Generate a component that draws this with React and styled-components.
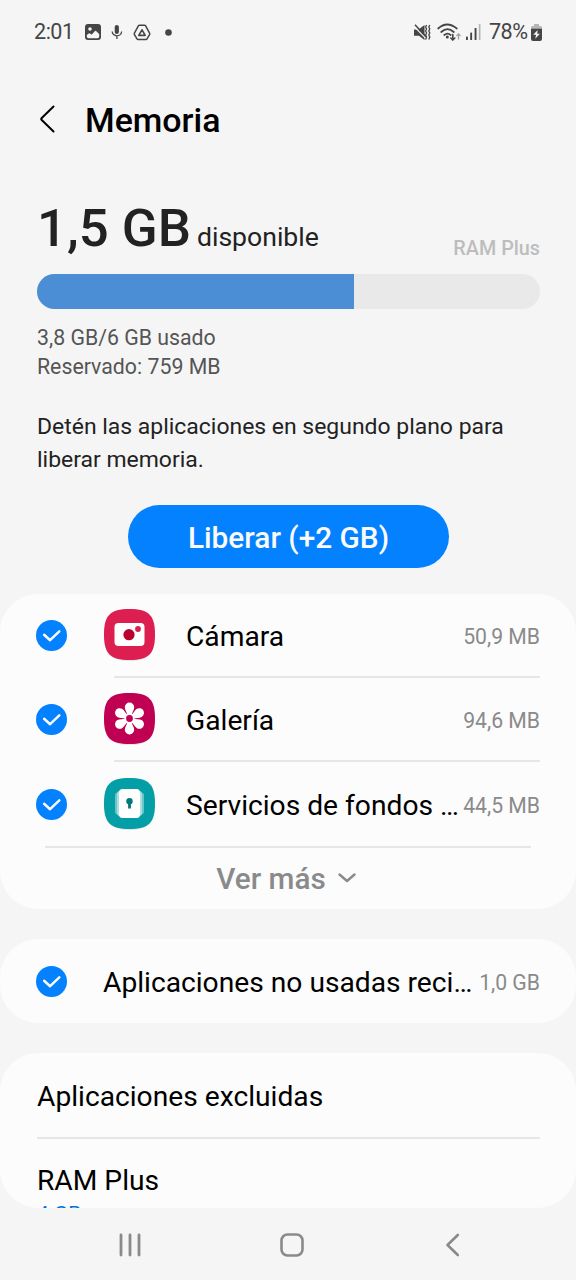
import React from 'react'
import styled, { createGlobalStyle } from 'styled-components'

const GlobalStyle = createGlobalStyle`
  * {
    box-sizing: border-box;
  }

  body {
    margin: 0;
    background: #f5f5f5;
    font-family: Roboto, 'Liberation Sans', sans-serif;
    color: #000;
  }
`

const Screen = styled.div`
  width: 576px;
  height: 1280px;
  display: flex;
  flex-direction: column;
  overflow: hidden;
  background: #f5f5f5;
`

// Status bar
const StatusBar = styled.div`
  height: 64px;
  flex: none;
  display: flex;
  align-items: center;
  justify-content: space-between;
  padding: 0 34px 0 34px;
  color: #454545;

  svg {
    display: block;
  }
`

const StatusGroup = styled.div`
  display: flex;
  align-items: center;
`

const StatusText = styled.span`
  font-size: 21.6px;
  letter-spacing: -0.5px;
  line-height: 26px;
  white-space: nowrap;
`

const StatusIcon = styled.span`
  margin-left: ${props => props.gap}px;
`

// Header
const Header = styled.header`
  height: 112px;
  flex: none;
  display: flex;
  align-items: center;
  padding-left: 37px;
`

const BackButton = styled.button`
  width: 48px;
  height: 48px;
  padding: 0;
  border: 0;
  background: none;

  svg {
    display: block;
  }
`

const Title = styled.h1`
  margin: 0;
  padding-top: 1px;
  font-size: 33.9px;
  font-weight: 500;
  line-height: 40px;
`

// Memory summary
const Summary = styled.section`
  flex: none;
  height: 418px;
  padding: 19px 36px 0 37px;
`

const SummaryTop = styled.div`
  display: flex;
  align-items: baseline;
  height: 79px;
  line-height: 66px;
  color: #222;
`

const Amount = styled.span`
  font-size: 52.7px;
  font-weight: 500;
`

const AmountLabel = styled.span`
  margin-left: 6px;
  font-size: 26.6px;
`

const RamPlusLabel = styled.span`
  align-self: flex-start;
  margin-left: auto;
  padding-top: 44px;
  font-size: 19.8px;
  font-weight: 500;
  line-height: 20px;
  color: #bdbdbd;
`

const Bar = styled.div`
  height: 35px;
  border-radius: 18px;
  overflow: hidden;
  background: #e9e9e9;
`

const BarFill = styled.div`
  height: 100%;
  background: #4b8ed5;
`

const Usage = styled.p`
  margin: 14px 0 0;
  font-size: 21.3px;
  line-height: 29px;
  color: #555;
`

const Description = styled.p`
  margin: 29px 0 0;
  font-size: 22.95px;
  line-height: 33px;
  color: #222;
`

const FreeButton = styled.button`
  display: block;
  width: 321px;
  height: 63px;
  margin: 29px auto 0;
  padding: 2px 0 0;
  border: 0;
  border-radius: 32px;
  background: #0381fe;
  color: #fafafa;
  font-family: inherit;
  font-size: 29.8px;
  font-weight: 500;
`

// Cards
const Cards = styled.main`
  flex: none;
  height: 614px;
  overflow: hidden;
  border-radius: 0 0 38px 38px;
  display: flex;
  flex-direction: column;
  gap: 30px;
`

const Card = styled.section`
  flex: none;
  height: ${props => props.height}px;
  border-radius: 38px;
  background: #fcfcfc;
`

const Divider = styled.div`
  height: 2px;
  margin: 0 ${props => props.right || 36}px 0 ${props => props.left}px;
  background: #e6e6e6;
`

const Row = styled.div`
  display: flex;
  align-items: center;
  height: ${props => props.height}px;
  padding: 0 36px;

  svg {
    display: block;
    flex: none;
  }
`

const IconSlot = styled.span`
  margin: 0 31px 0 37px;
`

const Name = styled.span`
  flex: 1;
  min-width: 0;
  margin-left: ${props => props.left || 0}px;
  padding-top: 4px;
  overflow: hidden;
  text-overflow: ellipsis;
  white-space: nowrap;
  font-size: 28.2px;
  line-height: 36px;
`

const Size = styled.span`
  margin-left: 4px;
  padding-top: 4px;
  font-size: 21.2px;
  line-height: 26px;
  white-space: nowrap;
  color: #8a8a8a;
`

const MoreButton = styled.button`
  display: flex;
  align-items: center;
  justify-content: center;
  width: 100%;
  height: 61px;
  padding: 0 4px 0 0;
  border: 0;
  background: none;
  font-family: inherit;
  font-size: 29.7px;
  font-weight: 500;
  color: #8a8a8a;

  svg {
    margin: -2px 0 0 12px;
  }
`

const SettingItem = styled.div`
  height: 84px;
  padding: ${props => props.top}px 37px 0;
  font-size: 28.2px;
  line-height: 36px;
`

const SettingValue = styled.div`
  font-size: 21px;
  line-height: 31px;
  color: #0072de;
`

// Navigation bar
const NavBar = styled.nav`
  flex: none;
  height: 72px;
  display: flex;
  align-items: center;
  justify-content: space-between;
  padding: 1px 114px 0 117px;

  svg {
    display: block;
  }
`

const ImageIcon = () => (
  <svg width="16" height="16" viewBox="0 0 16 16">
    <path
      fillRule="evenodd"
      fill="currentColor"
      d="M3 0H13Q16 0 16 3V13Q16 16 13 16H3Q0 16 0 13V3Q0 0 3 0ZM5 3.2a1.8 1.8 0 1 0 0 3.6a1.8 1.8 0 1 0 0-3.6ZM1.8 11V12.5Q1.8 14.2 3.5 14.2H12.5Q14.2 14.2 14.2 12.5V10L11 7Q10.4 6.600 9.800 7.200L7 10.300Q6.500 10.700 6 10.300L4.900 9.400Q4.300 9 3.800 9.400Z"
    />
  </svg>
)

const MicIcon = () => (
  <svg width="12" height="16" viewBox="0 0 12 16" fill="none" stroke="currentColor">
    <rect x="3.700" y="1" width="4.200" height="9" rx="2.100" fill="currentColor" stroke="none" />
    <path d="M1.200 7.500a4.700 4.300 0 0 0 9.400 0M5.900 12v3" strokeWidth="1.300" />
  </svg>
)

const DriveIcon = () => (
  <svg width="18" height="17" viewBox="0 0 18 17" fill="none" stroke="currentColor" strokeLinejoin="round">
    <path d="M6.400 1.200h5.200q.6 0 .9.500l4.200 7.600q.3.500 0 1l-2.700 4.600q-.3.500-.9.500H4.900q-.6 0-.9-.5l-2.700-4.600q-.3-.5 0-1l4.200-7.600q.3-.5.9-.5Z" strokeWidth="1.500" />
    <path d="M9 5.800l3.200 5.600H5.800Z" strokeWidth="1.600" />
  </svg>
)

const MuteIcon = () => (
  <svg width="17" height="17" viewBox="0 0 17 17">
    <path d="M0 5.500h4.500L10.500 1v15L5 11.800H0Z" fill="currentColor" />
    <path d="M0 2.400l11.500 11.600" stroke="#f5f5f5" strokeWidth="1.300" />
    <path d="M1 .8l11 12" stroke="currentColor" strokeWidth="1.500" />
    <path d="M12.600 1l-1 2 1 2-1 2 1 2-1 2 1 2-1 2.500M15.800 1l-1 2 1 2-1 2 1 2-1 2 1 2-1 2.500" fill="none" stroke="currentColor" strokeWidth="1.300" />
  </svg>
)

const WifiIcon = () => (
  <svg width="24" height="18" viewBox="0 0 24 18" fill="none" stroke="currentColor" strokeWidth="1.700" strokeLinecap="round">
    <path d="M1.200 5.500q8.800-8 18.600 0M4.200 9q6.300-5.600 12.600 0M7.300 12q3.200-2.700 6.400 0" />
    <circle cx="10.300" cy="14" r="1.500" fill="currentColor" stroke="none" />
    <path d="M15.800 11.500v5.500M13.800 15l2 2 2-2" strokeWidth="1.600" />
    <path d="M21.500 16v-5M19.900 12.500l1.600-1.600 1.600 1.600" stroke="#a0a0a0" strokeWidth="1.300" />
  </svg>
)

const SignalIcon = () => (
  <svg width="15" height="16" viewBox="0 0 15 16" fill="currentColor">
    <rect x="0" y="12.500" width="1.900" height="3.500" rx=".6" />
    <rect x="4.200" y="8.500" width="1.900" height="7.500" rx=".6" />
    <rect x="8.600" y="4" width="1.900" height="12" rx=".6" />
    <rect x="12.800" y="0" width="1.700" height="16" rx=".6" fill="#b5b5b5" />
  </svg>
)

const BatteryIcon = () => (
  <svg width="11" height="17" viewBox="0 0 11 17">
    <path d="M3 0h5v2h1.500Q11 2 11 3.500V6H0V3.500Q0 2 1.500 2H3Z" fill="#b5b5b5" />
    <path d="M0 4.800h11V15q0 2-2 2H2q-2 0-2-2Z" fill="currentColor" />
    <path d="M6.700 6L2.200 10.800H5L4.300 14.800 8.900 9.800H6.200Z" fill="#f5f5f5" />
  </svg>
)

const Check = () => (
  <svg width="31" height="31" viewBox="0 0 31 31">
    <circle cx="15.500" cy="15.500" r="15.500" fill="#0381fe" />
    <path d="M8.100 14.800l6 5.400 9.200-8.800" fill="none" stroke="#fcfcfc" strokeWidth="2.500" strokeLinecap="round" strokeLinejoin="round" />
  </svg>
)

const AppTile = ({ color, children }) => (
  <svg width="51" height="52" viewBox="0 0 51 52">
    <path d="M25.500 1.500C44 1.500 51 8 51 26.500S44 52 25.500 52 0 45 0 26.500 7 1.500 25.500 1.500Z" fill="#e6e6e6" />
    <path d="M25.500 0C45 0 51 6.500 51 25.500S45 51 25.500 51 0 44.500 0 25.500 6 0 25.500 0Z" fill={color} />
    {children}
  </svg>
)

const CameraIcon = () => (
  <AppTile color="#dc1e50">
    <rect x="10.500" y="14" width="30" height="23" rx="4" fill="#fff" />
    <circle cx="25" cy="25.700" r="5.600" fill="#b9022f" />
    <circle cx="34" cy="20" r="2.900" fill="#dc1e50" />
  </AppTile>
)

const GalleryIcon = () => (
  <AppTile color="#c00153">
    {[0, 60, 120, 180, 240, 300].map(angle => (
      <path
        key={angle}
        d="M23.400 22.500C23 19 20.800 17 20.800 14.200a4.700 4.700 0 0 1 9.400 0C30.200 17 28 19 27.600 22.500Z"
        fill="#fff"
        transform={`rotate(${angle} 25.500 25.500)`}
      />
    ))}
    <circle cx="25.500" cy="25.500" r="4.800" fill="#fff" />
    <circle cx="25.500" cy="25.500" r="3.400" fill="#c00153" />
  </AppTile>
)

const WallpaperIcon = () => (
  <AppTile color="#049fa6">
    <rect x="11" y="14.500" width="29" height="22" rx="3" fill="#68c6c9" />
    <rect x="13" y="13" width="25" height="25" rx="3" fill="#a9dfe1" />
    <rect x="15" y="11" width="21" height="29" rx="3.500" fill="#fff" />
    <circle cx="25.500" cy="23.200" r="3.200" fill="#03777d" />
    <rect x="24.100" y="23" width="2.800" height="7.500" fill="#03777d" />
  </AppTile>
)

const apps = [
  { name: 'Cámara', size: '50,9 MB', icon: <CameraIcon /> },
  { name: 'Galería', size: '94,6 MB', icon: <GalleryIcon /> },
  { name: 'Servicios de fondos de pantalla', size: '44,5 MB', icon: <WallpaperIcon /> },
]

const usedPercent = 63

export default () => {
  return (
    <Screen>
      <GlobalStyle />
      <StatusBar>
        <StatusGroup>
          <StatusText>2:01</StatusText>
          <StatusIcon gap={11}><ImageIcon /></StatusIcon>
          <StatusIcon gap={10}><MicIcon /></StatusIcon>
          <StatusIcon gap={10}><DriveIcon /></StatusIcon>
          <StatusIcon gap={14}>
            <svg width="7" height="7"><circle cx="3.500" cy="3.500" r="3.300" fill="currentColor" /></svg>
          </StatusIcon>
        </StatusGroup>
        <StatusGroup>
          <MuteIcon />
          <StatusIcon gap={6}><WifiIcon /></StatusIcon>
          <StatusIcon gap={5}><SignalIcon /></StatusIcon>
          <StatusIcon gap={8}><StatusText>78%</StatusText></StatusIcon>
          <StatusIcon gap={3.5}><BatteryIcon /></StatusIcon>
        </StatusGroup>
      </StatusBar>

      <Header>
        <BackButton aria-label="Atrás">
          <svg width="48" height="48" fill="none" stroke="#000" strokeWidth="2" strokeLinecap="round" strokeLinejoin="round">
            <path d="M16.500 10.500L4.500 22.200q-.7.800 0 1.600L16.500 35.500" />
          </svg>
        </BackButton>
        <Title>Memoria</Title>
      </Header>

      <Summary>
        <SummaryTop>
          <Amount>1,5 GB</Amount>
          <AmountLabel>disponible</AmountLabel>
          <RamPlusLabel>RAM Plus</RamPlusLabel>
        </SummaryTop>
        <Bar>
          <BarFill style={{ width: `${usedPercent}%` }} />
        </Bar>
        <Usage>
          3,8 GB/6 GB usado
          <br />
          Reservado: 759 MB
        </Usage>
        <Description>Detén las aplicaciones en segundo plano para liberar memoria.</Description>
        <FreeButton>Liberar (+2 GB)</FreeButton>
      </Summary>

      <Cards>
        <Card height={315}>
          {apps.map((app, index) => (
            <React.Fragment key={app.name}>
              {index > 0 && <Divider left={114} />}
              <Row height={index === 2 ? 84 : 82}>
                <Check />
                <IconSlot>{app.icon}</IconSlot>
                <Name>{app.name}</Name>
                <Size>{app.size}</Size>
              </Row>
            </React.Fragment>
          ))}
          <Divider left={45} right={45} />
          <MoreButton>
            Ver más
            <svg width="18" height="12" fill="none" stroke="currentColor" strokeWidth="2.400" strokeLinecap="round" strokeLinejoin="round">
              <path d="M1.500 2.500L9 9l7.500-6.500" />
            </svg>
          </MoreButton>
        </Card>

        <Card height={84}>
          <Row height={84}>
            <Check />
            <Name left={36}>Aplicaciones no usadas recientemente</Name>
            <Size>1,0 GB</Size>
          </Row>
        </Card>

        <Card height={200}>
          <SettingItem top={26}>Aplicaciones excluidas</SettingItem>
          <Divider left={37} />
          <SettingItem top={24}>
            RAM Plus
            <SettingValue>4 GB</SettingValue>
          </SettingItem>
        </Card>
      </Cards>

      <NavBar>
        <svg width="26" height="24" stroke="#8a8a8a" strokeWidth="2.800" strokeLinecap="round">
          <path d="M4 2v20M13 2v20M22 2v20" />
        </svg>
        <svg width="24" height="24" fill="none" stroke="#8a8a8a" strokeWidth="2.600">
          <rect x="1.500" y="1.500" width="21" height="21" rx="6" />
        </svg>
        <svg width="22" height="24" fill="none" stroke="#8a8a8a" strokeWidth="2.600" strokeLinecap="round" strokeLinejoin="round">
          <path d="M17.800 2L7.500 12l10.300 10" />
        </svg>
      </NavBar>
    </Screen>
  )
}
